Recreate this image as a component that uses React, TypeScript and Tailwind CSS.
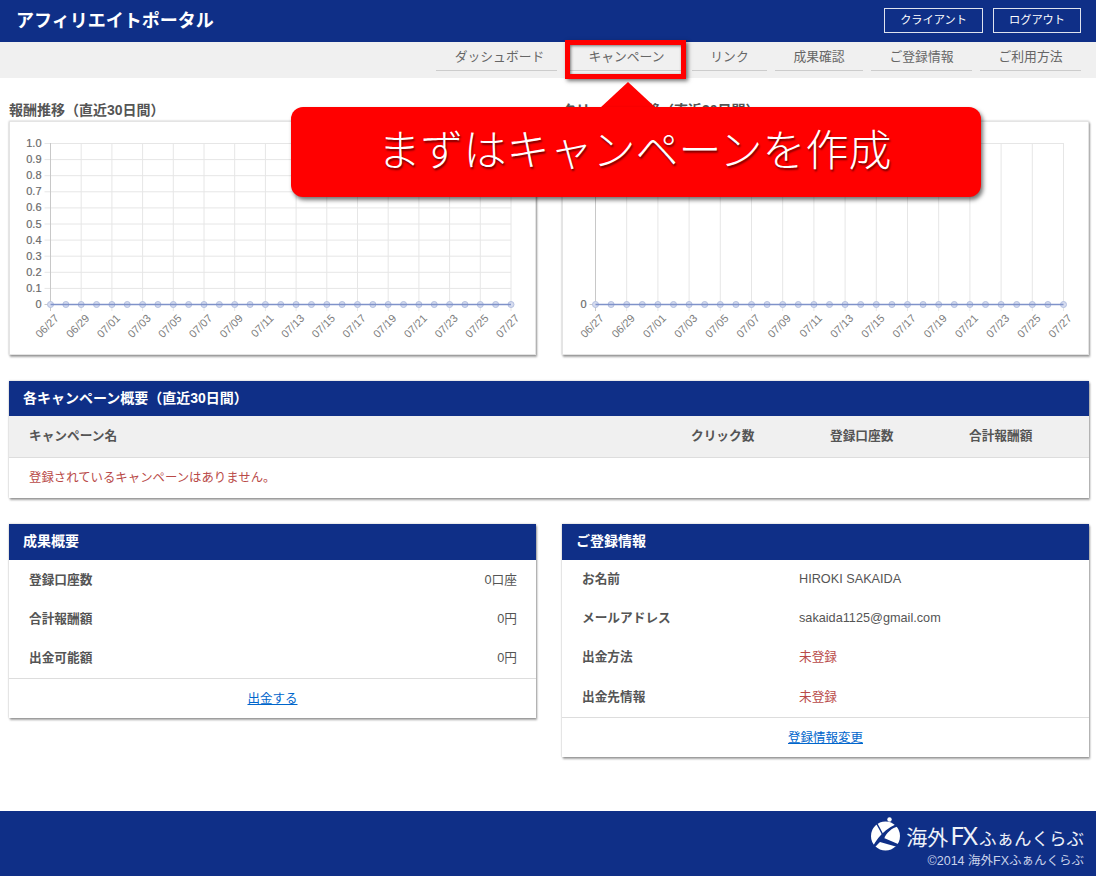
import React from "react";

const FONT = "font-['Liberation_Sans','Noto_Sans_CJK_JP',sans-serif]";
const CARD = "shadow-[1px_2px_2px_rgba(0,0,0,0.35),0_0_2px_rgba(0,0,0,0.25)]";
const labels = ["06/27","06/29","07/01","07/03","07/05","07/07","07/09","07/11","07/13","07/15","07/17","07/19","07/21","07/23","07/25","07/27"];

function Chart({ x0, x1, full }: { x0: number; x1: number; full: boolean }) {
  const top = 21, bottom = 182;
  const step = (x1 - x0) / 30;
  const pts = Array.from({ length: 31 }, (_, i) => x0 + i * step);
  const ys = Array.from({ length: 11 }, (_, i) => i);
  return (
    <svg width="525" height="232" viewBox="0 0 525 232" className="block">
      {full && ys.map((i) => {
        const y = bottom - (i * (bottom - top)) / 10 + 0.5;
        return <line key={i} x1={x0 - 6} x2={x1} y1={y} y2={y} stroke={i === 0 ? "#c8c8c8" : "#e6e6e6"} />;
      })}
      {!full && <line x1={x0 - 6} x2={x1} y1={top + 0.5} y2={top + 0.5} stroke="#e6e6e6" />}
      {!full && <line x1={x0 - 6} x2={x1} y1={bottom + 0.5} y2={bottom + 0.5} stroke="#c8c8c8" />}
      {labels.map((l, i) => {
        const x = x0 + i * step * 2;
        return (
          <g key={l}>
            <line x1={x} x2={x} y1={top} y2={bottom + 7} stroke={i === 0 ? "#c8c8c8" : "#e6e6e6"} />
            <text x={x + 9} y={bottom + 15} textAnchor="end" fontSize="11" fill="#7d7d7d" fontFamily="'Liberation Sans',sans-serif" transform={`rotate(-45 ${x + 9} ${bottom + 15})`}>{l}</text>
          </g>
        );
      })}
      {full ? ys.map((i) => (
        <text key={i} x={x0 - 9} y={bottom - (i * (bottom - top)) / 10 + 4} textAnchor="end" fontSize="11" stroke="#777" strokeWidth="0.2" fill="#666" fontFamily="'Liberation Sans',sans-serif">{i === 10 ? "1.0" : i === 0 ? "0" : `0.${i}`}</text>
      )) : <text x={x0 - 9} y={bottom + 4} textAnchor="end" fontSize="11" stroke="#777" strokeWidth="0.2" fill="#666" fontFamily="'Liberation Sans',sans-serif">0</text>}
      {pts.map((x, i) => <circle key={i} cx={x} cy={bottom + 0.5} r="3" fill="#d6dcef" stroke="#b4c0e0" />)}
      <line x1={x0} x2={x1} y1={bottom + 0.5} y2={bottom + 0.5} stroke="#7f92c9" strokeWidth="1.5" />
    </svg>
  );
}

function ChartPanel({ title, x0, x1, full }: { title: string; x0: number; x1: number; full: boolean }) {
  return (
    <div>
      <h2 className="text-[14px] leading-[20px] font-bold text-[#555] mb-px">{title}</h2>
      <div className={`h-[234px] bg-white border border-[#e4e4e4] ${CARD}`}>
        <Chart x0={x0} x1={x1} full={full} />
      </div>
    </div>
  );
}

function Card({ title, children, head = "h-[36px] leading-[35px]", className = "" }: { title: string; children: React.ReactNode; head?: string; className?: string }) {
  return (
    <section className={`bg-white ${CARD} ${className}`}>
      <h3 className={`bg-[#0f2f87] text-white text-[14px] font-bold pl-[14px] ${head}`}>{title}</h3>
      {children}
    </section>
  );
}

function Row({ k, v }: { k: string; v: string }) {
  return (
    <div className="flex items-center justify-between pl-[20px] pr-[19px] pt-[2px] h-[39px]">
      <span className="font-bold text-[12.7px] text-[#555]">{k}</span>
      <span className="text-[12.7px] text-[#555]">{v}</span>
    </div>
  );
}

function Row2({ k, v, red, h = "h-[39px]" }: { k: string; v: string; red?: boolean; h?: string }) {
  return (
    <div className={`flex items-center pl-[20px] ${h}`}>
      <span className="w-[217px] font-bold text-[12.7px] text-[#555]">{k}</span>
      <span className={`text-[12.7px] ${red ? "text-[#b94a48]" : "text-[#555]"}`}>{v}</span>
    </div>
  );
}

const nav: [string, string][] = [
  ["ダッシュボード", "w-[121px] pl-[6px]"],
  ["キャンペーン", "w-[119px] pl-[4px]"],
  ["リンク", "w-[75px]"],
  ["成果確認", "w-[88px]"],
  ["ご登録情報", "w-[101px]"],
  ["ご利用方法", "w-[101px]"],
];

export default function App() {
  return (
    <div className={`relative w-[1096px] h-[876px] overflow-hidden bg-white ${FONT}`}>
      <header className="h-[42px] bg-[#0f2f87] flex items-center justify-between pl-[16px] pr-[15px]">
        <h1 className="text-white font-bold text-[18px] leading-none">アフィリエイトポータル</h1>
        <div className="flex gap-[10px] -mt-[2px]">
          <a className="w-[99px] h-[25px] border border-[#dfe3ee] text-white text-[11.2px] flex items-center justify-center">クライアント</a>
          <a className="w-[88px] h-[25px] border border-[#dfe3ee] text-white text-[11.2px] flex items-center justify-center">ログアウト</a>
        </div>
      </header>
      <nav className="h-[36px] bg-[#f0f0f0] flex justify-end gap-[8px] pr-[15px]">
        {nav.map(([t, w]) => (
          <a key={t} className={`${w} h-[29px] pt-px border-b border-[#ccc] text-[12.8px] text-[#666] flex items-center justify-center`}>{t}</a>
        ))}
      </nav>
      <main className="pl-[9px] pr-[7px] pt-[22px]">
        <div className="grid grid-cols-2 gap-[26px]">
          <ChartPanel title="報酬推移（直近30日間）" x0={40.5} x1={501} full />
          <ChartPanel title="クリック数推移（直近30日間）" x0={32.5} x1={500.5} full={false} />
        </div>
        <Card title="各キャンペーン概要（直近30日間）" head="h-[35px] leading-[34px]" className="mt-[26px]">
          <div className="h-[42px] bg-[#f0f0f0] border-b border-[#ddd] flex items-center pl-[20px] text-[12.7px] font-bold text-[#555]">
            <span className="flex-1">キャンペーン名</span>
            <span className="w-[139px]">クリック数</span>
            <span className="w-[139px]">登録口座数</span>
            <span className="w-[120px]">合計報酬額</span>
          </div>
          <div className="h-[40px] flex items-center pl-[20px] text-[12.4px] text-[#b94a48]">登録されているキャンペーンはありません。</div>
        </Card>
        <div className="grid grid-cols-2 gap-[26px] mt-[26px] items-start">
          <Card title="成果概要">
            <Row k="登録口座数" v="0口座" />
            <Row k="合計報酬額" v="0円" />
            <Row k="出金可能額" v="0円" />
            <div className="h-[40px] mt-px pt-[2px] border-t border-[#ddd] flex items-center justify-center">
              <a className="text-[12.5px] text-[#0066cc] underline">出金する</a>
            </div>
          </Card>
          <Card title="ご登録情報">
            <Row2 k="お名前" v="HIROKI SAKAIDA" />
            <Row2 k="メールアドレス" v="sakaida1125@gmail.com" />
            <Row2 k="出金方法" v="未登録" red />
            <Row2 k="出金先情報" v="未登録" red h="h-[40px] pt-[2px]" />
            <div className="h-[40px] pt-[2px] border-t border-[#ddd] flex items-center justify-center">
              <a className="text-[12.5px] text-[#0066cc] underline">登録情報変更</a>
            </div>
          </Card>
        </div>
      </main>
      <footer className="absolute left-0 right-0 bottom-0 h-[65px] bg-[#0f2f87] flex flex-col items-end pr-[12px] pt-[5px] text-white">
        <div className="flex items-end gap-[4px] h-[36px]">
          <svg width="33" height="35" viewBox="0 0 33 35">
            <circle cx="16.500" cy="19" r="14.500" fill="#fff" />
            <path d="M1 35C7 22 16 10 33 5L30 9C22 11 18 16 15 21L29 27L32 31L11 25C8 28 5 31 1 35Z" fill="#0f2f87" />
            <path d="M8 7C12 14 14 18 15 21" fill="none" stroke="#0f2f87" strokeWidth="1.500" />
            <circle cx="20.500" cy="2.500" r="2.200" fill="#fff" />
          </svg>
          <span className="leading-none text-[#eef1f8] whitespace-nowrap pb-[4px]">
            <span className="text-[21px]">海外</span>
            <span className="text-[26px] ml-[2px] mr-[2px] font-['Noto_Sans',sans-serif] tracking-[-1px]">FX</span>
            <span className="text-[17.5px]">ふぁんくらぶ</span>
          </span>
        </div>
        <p className="text-[12.500px] leading-[16px] mt-[1px] text-[#c9d2ea]">©2014 海外FXふぁんくらぶ</p>
      </footer>

      {/* annotation overlay */}
      <div className="absolute left-[565px] top-[40px] w-[121px] h-[39px] border-[5px] border-[#ff0000] shadow-[2px_2px_4px_rgba(0,0,0,0.55),inset_1px_1px_3px_rgba(0,0,0,0.5)]" />
      <svg className="absolute left-[596px] top-[80px]" width="64" height="30" viewBox="0 0 64 30">
        <path d="M4 28L32 2L60 28Z" fill="#ff0000" />
      </svg>
      <div className="absolute left-[291px] top-[107px] w-[690px] h-[90px] rounded-[12px] bg-[#ff0000] shadow-[2px_3px_4px_rgba(0,0,0,0.55)] flex items-center justify-center">
        <span className="text-white text-[43px] leading-none font-light -ml-[3px] -mt-[1px] [text-shadow:1px_2px_2px_rgba(0,0,0,0.55)]">まずはキャンペーンを作成</span>
      </div>
    </div>
  );
}
